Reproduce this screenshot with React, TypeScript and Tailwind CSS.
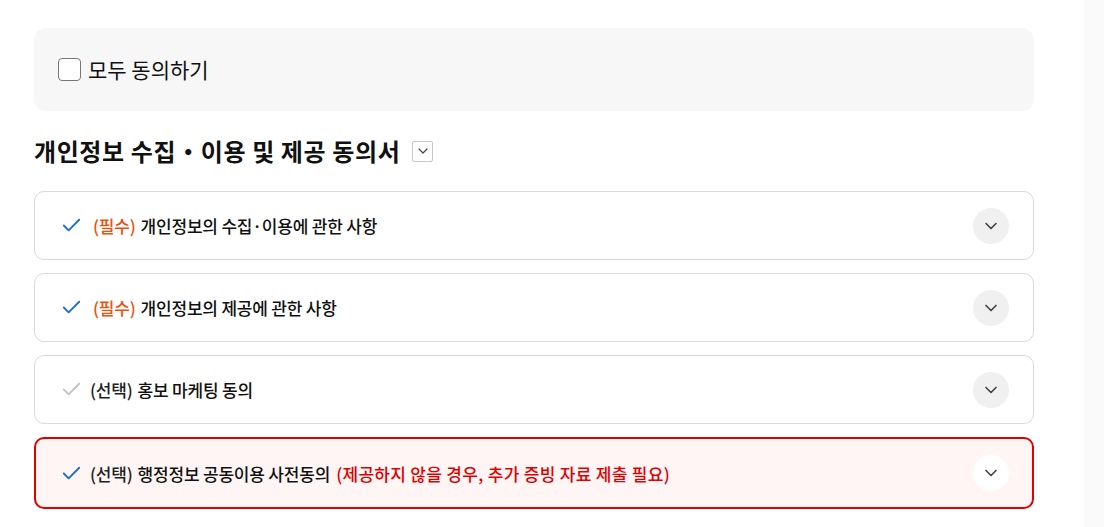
import { Check, ChevronDown } from "lucide-react";

type Item = {
    tag: string;
    required: boolean;
    label: string;
    note?: string;
    checked: boolean;
    alert?: boolean;
};

const items: Item[] = [
    { tag: "(필수)", required: true, label: "개인정보의 수집·이용에 관한 사항", checked: true },
    { tag: "(필수)", required: true, label: "개인정보의 제공에 관한 사항", checked: true },
    { tag: "(선택)", required: false, label: "홍보 마케팅 동의", checked: false },
    {
        tag: "(선택)",
        required: false,
        label: "행정정보 공동이용 사전동의",
        note: "(제공하지 않을 경우, 추가 증빙 자료 제출 필요)",
        checked: true,
        alert: true,
    },
];

const App = () => {
    return (
        <div
            className="flex min-h-[527px] bg-white text-[#111]"
            style={{ fontFamily: '"Noto Sans CJK KR", "Noto Sans", sans-serif' }}
        >
            <main className="w-[1084px] px-[34px] pt-[28px]">
                <div className="flex h-[83px] w-[1000px] items-center rounded-xl bg-[#f7f7f7] px-6">
                    <label className="flex items-center gap-[7px] cursor-pointer">
                        <span className="h-[23px] w-[23px] rounded-[4px] border border-[#767676] bg-white" />
                        <span className="text-[21px] leading-none">모두 동의하기</span>
                    </label>
                </div>

                <div className="mt-[24px] flex items-center gap-3">
                    <h2 className="text-[24px] font-bold leading-[32px] tracking-[0.6px]">
                        개인정보 수집・이용 및 제공 동의서
                    </h2>
                    <button className="flex h-[21px] w-[21px] items-center justify-center rounded-[2px] border border-[#c8c8c8] bg-white text-[#444]">
                        <ChevronDown className="h-4 w-4" strokeWidth={1.8} />
                    </button>
                </div>

                <ul className="mt-[24px] flex w-[1000px] flex-col gap-[13px]">
                    {items.map((item, index) => (
                        <li
                            key={index}
                            className={
                                item.alert
                                    ? "flex h-[72px] items-center rounded-[10px] border-2 border-[#e00000] bg-[#fff5f5] pl-[24px] pr-[23px]"
                                    : "flex h-[69px] items-center rounded-[10px] border border-[#d9d9d9] bg-white pl-[25px] pr-[24px]"
                            }
                        >
                            <Check
                                className={item.checked ? "h-[23px] w-[23px] text-[#1a6be0]" : "h-[23px] w-[23px] text-[#c4c4c4]"}
                                strokeWidth={1.9}
                            />
                            <p className="ml-[7px] flex-1 text-[17px] font-medium leading-none tracking-[-0.2px]">
                                <span className={item.required ? "mr-[5px] ml-[3px] text-[#f0500a]" : "mr-[5px] text-[#222]"}>
                                    {item.tag}
                                </span>
                                {item.label}
                                {item.note && (
                                    <span className="ml-[6px] tracking-[0.3px] text-[#e00000]">{item.note}</span>
                                )}
                            </p>
                            <span
                                className={
                                    item.alert
                                        ? "flex h-9 w-9 items-center justify-center rounded-full bg-white text-[#444]"
                                        : "flex h-9 w-9 items-center justify-center rounded-full bg-[#f0f0f0] text-[#444]"
                                }
                            >
                                <ChevronDown className="h-5 w-5" strokeWidth={2} />
                            </span>
                        </li>
                    ))}
                </ul>
            </main>
            <aside className="flex-1 bg-[#fafafa]" />
        </div>
    );
};

export default App;
